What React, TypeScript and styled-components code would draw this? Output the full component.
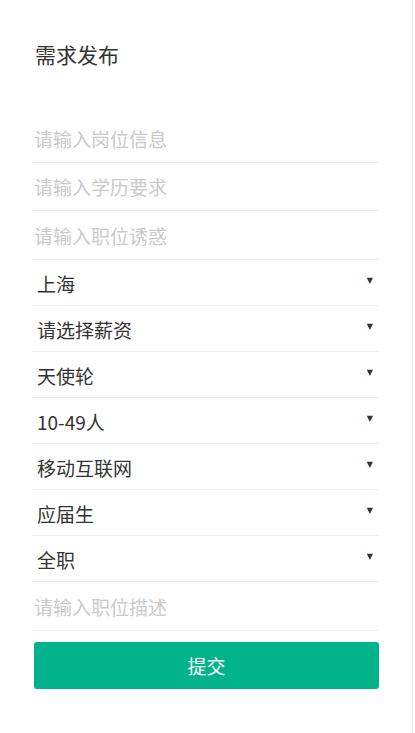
import styled, { createGlobalStyle } from 'styled-components';

const GlobalStyle = createGlobalStyle`
  body {
    margin: 0;
    background: #fff;
    font-family: "Noto Sans CJK SC", "Liberation Sans", sans-serif;
  }
`;

const inputFields = [
  { key: 'position', placeholder: '请输入岗位信息', tall: false },
  { key: 'education', placeholder: '请输入学历要求', tall: false },
  { key: 'perks', placeholder: '请输入职位诱惑', tall: true },
];

const selectFields = [
  { key: 'city', value: '上海' },
  { key: 'salary', value: '请选择薪资' },
  { key: 'stage', value: '天使轮' },
  { key: 'size', value: '10-49人' },
  { key: 'industry', value: '移动互联网' },
  { key: 'experience', value: '应届生' },
  { key: 'type', value: '全职' },
];

export default function App() {
  return (
    <>
      <GlobalStyle />
      <Page>
        <Title>需求发布</Title>
        <Form onSubmit={(e) => e.preventDefault()}>
          {inputFields.map((f) => (
            <Field key={f.key} $tall={f.tall}>
              <TextInput type="text" placeholder={f.placeholder} />
            </Field>
          ))}
          {selectFields.map((f) => (
            <SelectRow key={f.key}>
              <SelectText>{f.value}</SelectText>
              <Arrow>▼</Arrow>
            </SelectRow>
          ))}
          <Field $tall>
            <TextInput type="text" placeholder="请输入职位描述" />
          </Field>
          <SubmitButton type="submit">提交</SubmitButton>
        </Form>
      </Page>
    </>
  );
}

const Page = styled.div`
  box-sizing: border-box;
  width: 413px;
  min-height: 733px;
  padding: 0 33px 0 32px;
  border-right: 1px solid #efefef;
`;

const Title = styled.h1`
  margin: 0;
  padding: 40px 0 0 3px;
  height: 115px;
  box-sizing: border-box;
  font-size: 21px;
  font-weight: normal;
  line-height: 28px;
  color: #333;
`;

const Form = styled.form`
  display: flex;
  flex-direction: column;
`;

const Field = styled.div<{ $tall?: boolean }>`
  display: flex;
  align-items: center;
  height: ${({ $tall }) => ($tall ? '48px' : '47px')};
  border-bottom: 1px solid #eee;
`;

const TextInput = styled.input`
  width: 100%;
  border: none;
  outline: none;
  padding: 0 0 0 2px;
  font-family: inherit;
  font-size: 19px;
  color: #333;
  background: transparent;

  &::placeholder {
    color: #cacaca;
  }
`;

const SelectRow = styled.div`
  display: flex;
  align-items: center;
  justify-content: space-between;
  height: 43px;
  padding: 2px 6px 0 5px;
  border-bottom: 1px solid #eee;
`;

const SelectText = styled.span`
  font-size: 19px;
  color: #333;
`;

const Arrow = styled.span`
  font-family: "DejaVu Sans", sans-serif;
  font-size: 8px;
  color: #333;
  margin-top: -6px;
`;

const SubmitButton = styled.button`
  margin: 11px 0 0 2px;
  height: 47px;
  border: none;
  border-radius: 3px;
  background: #00b38a;
  color: #fff;
  font-family: inherit;
  font-size: 19px;
  cursor: pointer;
`;
